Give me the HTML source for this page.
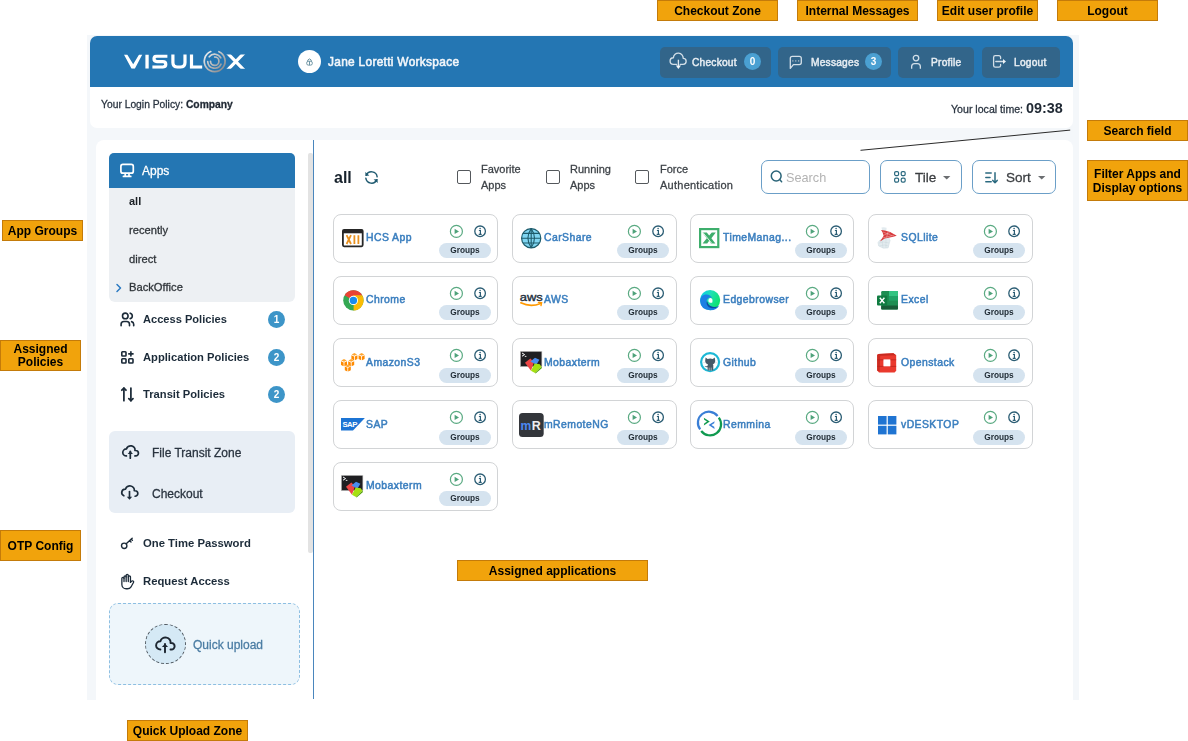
<!DOCTYPE html>
<html><head><meta charset="utf-8"><style>
*{box-sizing:border-box;margin:0;padding:0}
html,body{width:1188px;height:741px;overflow:hidden;background:#fff;font-family:"Liberation Sans",sans-serif}
.a{position:absolute}
.t{position:absolute;white-space:nowrap;line-height:1;will-change:transform}
.m{-webkit-text-stroke:0.28px currentColor}
svg{position:absolute;overflow:visible}
.lbl{will-change:transform;position:absolute;background:#f1a30c;border:1px solid #c47b0a;color:#000;font:bold 12px "Liberation Sans",sans-serif;text-align:center;line-height:14px;display:flex;align-items:center;justify-content:center}
.hbtn{position:absolute;top:46.5px;height:31px;background:#32658a;border-radius:5px}
.htx{will-change:transform;position:absolute;color:#eaf0f5;font:bold 9.9px "Liberation Sans",sans-serif;white-space:nowrap;line-height:1}
.badge{will-change:transform;position:absolute;width:17px;height:17px;border-radius:50%;background:#4aa0d2;color:#fff;font:bold 10px "Liberation Sans",sans-serif;text-align:center;line-height:17px}
.sbadge{will-change:transform;position:absolute;width:17px;height:17px;border-radius:50%;background:#3d95c8;color:#fff;font:bold 10px "Liberation Sans",sans-serif;text-align:center;line-height:17px}
.card{position:absolute;width:165px;height:49px;border:1px solid #d2d4d6;border-radius:8px;background:#fff}
.cname{will-change:transform;position:absolute;top:18.5px;color:#3b7fbf;font:10.4px "Liberation Sans",sans-serif;-webkit-text-stroke:0.5px #3b7fbf;letter-spacing:0.45px;white-space:nowrap;line-height:1}
.pill{will-change:transform;position:absolute;right:6.5px;top:28.8px;width:52px;height:15px;border-radius:8px;background:#d5e3ef;color:#1f2a33;font:bold 8.3px "Liberation Sans",sans-serif;text-align:center;line-height:15px}
.tb{position:absolute;top:159.5px;height:34.5px;border:1.5px solid #6b9fc8;border-radius:7px;background:#fff}
</style></head><body>
<div class="lbl" style="left:657px;top:0px;width:121px;height:21px">Checkout Zone</div>
<div class="lbl" style="left:797px;top:0px;width:121px;height:21px">Internal Messages</div>
<div class="lbl" style="left:937px;top:0px;width:101px;height:21px">Edit user profile</div>
<div class="lbl" style="left:1057px;top:0px;width:101px;height:21px">Logout</div>
<div class="a" style="left:87px;top:34.5px;width:992px;height:665px;background:#f4f7fa"></div>
<div class="a" style="left:90px;top:36px;width:983px;height:91.5px;background:#fff;border-radius:7px;overflow:hidden"><div class="a" style="left:0;top:0;width:983px;height:51.3px;background:#2476b3"></div></div>
<svg style="left:120px;top:48px" width="130" height="28" viewBox="0 0 130 28">
<defs><linearGradient id="lg" x1="0" y1="0" x2="1" y2="1"><stop offset="0" stop-color="#f4f6f8"/><stop offset="1" stop-color="#7d7f82"/></linearGradient></defs>
<defs><clipPath id="lc"><rect x="0" y="6.5" width="130" height="14.2"/></clipPath></defs>
<g clip-path="url(#lc)">
<path d="M3.9,6.5 L7.2,6.5 L13.2,16.2 L19.1,6.5 L22.3,6.5 L14.8,20.7 L11.6,20.7 Z" fill="#fff"/>
<rect x="25.4" y="6.5" width="3.3" height="14.2" fill="#fff"/>
<g fill="none" stroke="#fff" stroke-width="3.2">
<path d="M47.4,8.1 H37 Q34,8.1 34,10.85 Q34,13.6 37,13.6 H42.8 Q45.8,13.6 45.8,16.35 Q45.8,19.1 42.8,19.1 H32.4"/>
<path d="M52.9,4 V14.6 Q52.9,19.1 57.4,19.1 H60.5 Q65,19.1 65,14.6 V4"/>
<path d="M71.5,4 V19.1 H82.2"/>
<path d="M106.39,4 L125.11,23.2 M125.11,4 L106.39,23.2"/>
</g></g>
<path d="M98.93,3.70 A10.4,10.4 0 1 1 90.80,3.56 M89.26,8.79 A7.0,7.0 0 0 1 100.82,9.81 M101.04,16.16 A7.0,7.0 0 0 1 87.72,13.69 M94.70,9.00 A4.2,4.2 0 1 1 90.50,13.35" fill="none" stroke="url(#lg)" stroke-width="1.7" stroke-linecap="round"/>
</svg>
<div class="a" style="left:298.1px;top:50.1px;width:23px;height:23px;border-radius:50%;background:#fff"></div>
<svg style="left:305.3px;top:56.8px" width="9" height="9" viewBox="0 0 9 9"><g fill="none" stroke="#6d94a3" stroke-width="1"><path d="M2.8,4.5 V3 Q4.5,0.8 6.2,3 V4.5"/><rect x="1.7" y="4.3" width="5.6" height="3.8" rx="1.6"/><path d="M4.5,4.3 V8.1"/></g></svg>
<div class="t m" style="left:328px;top:54.83px;font:11.9px 'Liberation Sans',sans-serif;color:#f2f6fa;-webkit-text-stroke:0.55px #f2f6fa;letter-spacing:0.3px">Jane Loretti Workspace</div>
<div class="hbtn" style="left:660px;width:111px"></div>
<div class="hbtn" style="left:778px;width:113.4px"></div>
<div class="hbtn" style="left:898.3px;width:76.2px"></div>
<div class="hbtn" style="left:982px;width:78px"></div>
<div class="t m" style="left:692.4px;top:56.77px;font:10.2px 'Liberation Sans',sans-serif;color:#e8eef3;-webkit-text-stroke:0.45px #e8eef3;letter-spacing:0.22px">Checkout</div>
<div class="t m" style="left:810.7px;top:56.77px;font:10.2px 'Liberation Sans',sans-serif;color:#e8eef3;-webkit-text-stroke:0.45px #e8eef3;letter-spacing:0.22px">Messages</div>
<div class="t m" style="left:931px;top:56.77px;font:10.2px 'Liberation Sans',sans-serif;color:#e8eef3;-webkit-text-stroke:0.45px #e8eef3;letter-spacing:0.22px">Profile</div>
<div class="t m" style="left:1014.2px;top:56.77px;font:10.2px 'Liberation Sans',sans-serif;color:#e8eef3;-webkit-text-stroke:0.45px #e8eef3;letter-spacing:0.22px">Logout</div>
<div class="badge" style="left:744.3px;top:53.3px">0</div>
<div class="badge" style="left:864.9px;top:53.3px">3</div>
<svg style="left:664px;top:50px" width="28" height="24" viewBox="664 50 28 24"><g fill="none" stroke="#d3dfe8" stroke-width="1.35" stroke-linecap="round" stroke-linejoin="round"><path d="M676.6,64.3 H673.4 A3.3,3.3 0 0 1 673.4,57.7 A4.9,4.9 0 0 1 683.2,58.4 A2.95,2.95 0 0 1 683.2,64.3 H680.2"/></g><path d="M678.4,59.7 V66" stroke="#dfe8ef" stroke-width="1.35"/><path d="M675.8,65.5 L681,65.5 L678.4,68.9 Z" fill="#f2f6f9"/></svg>
<svg style="left:788px;top:54px" width="16" height="16" viewBox="0 0 16 16"><path d="M2.3,14.4 V4.3 Q2.3,2.3 4.3,2.3 H11.3 Q13.3,2.3 13.3,4.3 V8.6 Q13.3,10.6 11.3,10.6 H5.4 Z" fill="none" stroke="#d3dfe8" stroke-width="1.3" stroke-linejoin="round"/><g fill="#aebfcc"><rect x="4.3" y="6.2" width="1.1" height="1.4"/><rect x="7.2" y="6.2" width="1.1" height="1.4"/><rect x="10.1" y="6.2" width="1.1" height="1.4"/></g></svg>
<svg style="left:910px;top:54px" width="12" height="16" viewBox="0 0 12 16"><g fill="none" stroke="#d3dfe8" stroke-width="1.3"><circle cx="6" cy="4.1" r="2.75"/><path d="M1.65,14.8 V12.6 Q1.65,9.6 4.6,9.6 H7.4 Q10.35,9.6 10.35,12.6 V14.8"/></g></svg>
<svg style="left:990px;top:52px" width="18" height="18" viewBox="0 0 18 18"><g fill="none" stroke="#d3dfe8" stroke-width="1.3" stroke-linecap="round" stroke-linejoin="round"><path d="M10.6,6.6 V5.4 Q10.6,3.7 8.9,3.7 H5.3 Q3.6,3.7 3.6,5.4 V13.4 Q3.6,15.1 5.3,15.1 H8.9 Q10.6,15.1 10.6,13.4 V12.4"/><path d="M5.8,9.5 H13.4"/></g><path d="M13,6.9 L16,9.5 L13,12.1 Z" fill="#eef3f7"/></svg>
<div class="t m" style="left:100.7px;top:99.2px;font:10.3px 'Liberation Sans',sans-serif;color:#2a3440">Your Login Policy: <b style="color:#1f2833">Company</b></div>
<div class="t m" style="left:950.6px;top:103.01px;font:10.6px 'Liberation Sans',sans-serif;color:#2a3440;">Your local time:</div>
<div class="t" style="left:1026px;top:99.57px;font:bold 14.4px 'Liberation Sans',sans-serif;color:#1f2833;">09:38</div>
<div class="a" style="left:96px;top:140px;width:977px;height:560px;background:#fff;border-radius:8px 8px 0 0"></div>
<div class="a" style="left:308px;top:153px;width:4.5px;height:400px;background:#e3e3e3;border-radius:2px"></div>
<div class="a" style="left:312.7px;top:140px;width:1.4px;height:559px;background:#4a86bd"></div>
<div class="a" style="left:109px;top:152.8px;width:185.6px;height:148.8px;background:#edf0f3;border-radius:5px 5px 6px 6px;overflow:hidden"><div class="a" style="left:0;top:0;width:186px;height:35.3px;background:#2476b3"></div></div>
<svg style="left:118px;top:161px" width="18" height="18" viewBox="0 0 18 18"><g fill="none" stroke="#fff" stroke-width="1.7" stroke-linecap="round"><rect x="2.9" y="3.4" width="12.4" height="8.8" rx="2"/><path d="M7.2,12.6 V15.2 M11,12.6 V15.2"/><path d="M5.4,15.4 H12.8"/></g></svg>
<div class="t m" style="left:142.3px;top:163.84px;font:12px 'Liberation Sans',sans-serif;color:#fff;">Apps</div>
<div class="t" style="left:129.3px;top:195.44px;font:bold 11px 'Liberation Sans',sans-serif;color:#1a1f24;">all</div>
<div class="t m" style="left:129.3px;top:224.16px;font:11.2px 'Liberation Sans',sans-serif;color:#2f3439;">recently</div>
<div class="t m" style="left:129.3px;top:252.76px;font:11.2px 'Liberation Sans',sans-serif;color:#2f3439;">direct</div>
<div class="t m" style="left:129.3px;top:281.16px;font:11.2px 'Liberation Sans',sans-serif;color:#2f3439;">BackOffice</div>
<svg style="left:115px;top:283px" width="8" height="10" viewBox="0 0 8 10"><path d="M2,1.5 L5.5,5 L2,8.5" fill="none" stroke="#2b79c2" stroke-width="1.5" stroke-linecap="round" stroke-linejoin="round"/></svg>
<svg style="left:118.8px;top:310.8px" width="16.8" height="16.8" viewBox="0 0 24 24"><g fill="none" stroke="#1c2b39" stroke-width="2.3" stroke-linecap="round" stroke-linejoin="round"><path d="M9 7m-4 0a4 4 0 1 0 8 0a4 4 0 1 0 -8 0"/><path d="M3 21v-2a4 4 0 0 1 4 -4h4a4 4 0 0 1 4 4v2"/><path d="M16 3.13a4 4 0 0 1 0 7.75"/><path d="M21 21v-2a4 4 0 0 0 -3 -3.85"/></g></svg>
<div class="t" style="left:142.5px;top:313.45px;font:bold 11.1px 'Liberation Sans',sans-serif;color:#1c2b39;">Access Policies</div>
<div class="sbadge" style="left:268px;top:311.1px">1</div>
<svg style="left:118.8px;top:348.8px" width="16.8" height="16.8" viewBox="0 0 24 24"><g fill="none" stroke="#1c2b39" stroke-width="2.3" stroke-linecap="round" stroke-linejoin="round"><path d="M4 4m0 1a1 1 0 0 1 1 -1h4a1 1 0 0 1 1 1v4a1 1 0 0 1 -1 1h-4a1 1 0 0 1 -1 -1z"/><path d="M4 14m0 1a1 1 0 0 1 1 -1h4a1 1 0 0 1 1 1v4a1 1 0 0 1 -1 1h-4a1 1 0 0 1 -1 -1z"/><path d="M14 14m0 1a1 1 0 0 1 1 -1h4a1 1 0 0 1 1 1v4a1 1 0 0 1 -1 1h-4a1 1 0 0 1 -1 -1z"/><path d="M14 7l6 0"/><path d="M17 4l0 6"/></g></svg>
<div class="t" style="left:142.5px;top:351.06px;font:bold 11.2px 'Liberation Sans',sans-serif;color:#1c2b39;">Application Policies</div>
<div class="sbadge" style="left:268px;top:348.5px">2</div>
<svg style="left:118.8px;top:386.3px" width="16.8" height="16.8" viewBox="0 0 24 24"><g fill="none" stroke="#1c2b39" stroke-width="2.5" stroke-linecap="round" stroke-linejoin="round"><path d="M7 3l0 18"/><path d="M10 6l-3 -3l-3 3"/><path d="M20 18l-3 3l-3 -3"/><path d="M17 21l0 -18"/></g></svg>
<div class="t" style="left:142.5px;top:388.46px;font:bold 11.2px 'Liberation Sans',sans-serif;color:#1c2b39;">Transit Policies</div>
<div class="sbadge" style="left:268px;top:386px">2</div>
<div class="a" style="left:109.2px;top:431px;width:185.8px;height:82px;background:#e8eef5;border-radius:6px"></div>
<svg style="left:121.2px;top:442.4px" width="18.6" height="18.6" viewBox="0 0 24 24"><g fill="none" stroke="#1c2b39" stroke-width="2.2" stroke-linecap="round" stroke-linejoin="round"><path d="M7 18a4.6 4.4 0 0 1 0 -9a5 4.5 0 0 1 11 2h1a3.5 3.5 0 0 1 0 7h-1"/><path d="M12 12l0 9"/></g><path d="M8.6,15.4 L12,11.6 L15.4,15.4 Z" fill="#1c2b39"/></svg>
<div class="t m" style="left:151.7px;top:446.04px;font:12px 'Liberation Sans',sans-serif;color:#2a3440;">File Transit Zone</div>
<svg style="left:120.4px;top:481.6px" width="19" height="19" viewBox="0 0 24 24"><g fill="none" stroke="#1c2b39" stroke-width="2.1" stroke-linecap="round" stroke-linejoin="round"><path d="M19 18a3.5 3.5 0 0 0 0 -7h-1a5 4.5 0 0 0 -11 -2a4.6 4.4 0 0 0 -2.1 8.4"/><path d="M12 12l0 8"/></g><path d="M8.6,18.6 L12,22.4 L15.4,18.6 Z" fill="#1c2b39"/></svg>
<div class="t m" style="left:151.7px;top:486.84px;font:12px 'Liberation Sans',sans-serif;color:#2a3440;">Checkout</div>
<svg style="left:120px;top:537px" width="14" height="13" viewBox="0 0 14 13"><g fill="none" stroke="#1c2b39" stroke-width="1.4" stroke-linecap="round"><circle cx="4.2" cy="8.8" r="2.7"/><path d="M6.2,6.8 L12.2,1.2 M9.6,3.6 L11,5 M11.2,2.1 L12.4,3.3"/></g></svg>
<div class="t" style="left:142.5px;top:537.27px;font:bold 11.3px 'Liberation Sans',sans-serif;color:#1c2b39;">One Time Password</div>
<svg style="left:118.8px;top:572.5px" width="17.2" height="17.2" viewBox="0 0 24 24"><g fill="none" stroke="#1c2b39" stroke-width="1.8" stroke-linecap="round" stroke-linejoin="round"><g transform="translate(24,0) scale(-1,1)"><path d="M8 13v-7.5a1.5 1.5 0 0 1 3 0v6.5"/><path d="M11 5.5v-2a1.5 1.5 0 1 1 3 0v8.5"/><path d="M14 5.5a1.5 1.5 0 0 1 3 0v6.5"/><path d="M17 7.5a1.5 1.5 0 0 1 3 0v8.5a6 6 0 0 1 -6 6h-2h.208a6 6 0 0 1 -5.012 -2.7a69.74 69.74 0 0 1 -.196 -.3c-.312 -.479 -1.407 -2.388 -3.286 -5.728a1.5 1.5 0 0 1 .536 -2.022a1.867 1.867 0 0 1 2.28 .28l1.47 1.47"/></g></g></svg>
<div class="t" style="left:142.5px;top:574.87px;font:bold 11.3px 'Liberation Sans',sans-serif;color:#1c2b39;">Request Access</div>
<div class="a" style="left:109.2px;top:603.2px;width:190.4px;height:81.5px;background:#eef6fb;border:1px dashed #8dbfe2;border-radius:9px"></div>
<div class="a" style="left:145.2px;top:624px;width:40.4px;height:40.4px;background:#d5e9f5;border:1px dashed #555e66;border-radius:50%"></div>
<svg style="left:154.4px;top:633.2px" width="22" height="22" viewBox="0 0 24 24"><g fill="none" stroke="#1d2630" stroke-width="2.1" stroke-linecap="round" stroke-linejoin="round"><path d="M7 18a4.6 4.4 0 0 1 0 -9a5 4.5 0 0 1 11 2h1a3.5 3.5 0 0 1 0 7h-1"/><path d="M12 12l0 9"/></g><path d="M8.6,15.4 L12,11.6 L15.4,15.4 Z" fill="#1d2630"/></svg>
<div class="t m" style="left:193.1px;top:638.14px;font:12px 'Liberation Sans',sans-serif;color:#4a7ca3;">Quick upload</div>
<div class="t" style="left:333.9px;top:169.02px;font:bold 16px 'Liberation Sans',sans-serif;color:#17222c;">all</div>
<svg style="left:362.6px;top:168.6px" width="17" height="17" viewBox="0 0 24 24"><g fill="none" stroke="#1f5a70" stroke-width="2" stroke-linecap="round" stroke-linejoin="round"><path d="M20 11a8.1 8.1 0 0 0 -15.5 -2"/><path d="M4 13a8.1 8.1 0 0 0 15.5 2"/></g><path d="M3.2,4.2 L3.6,9.8 L9,9.2 Z M20.8,19.8 L20.4,14.2 L15,14.8 Z" fill="#1f5a70"/></svg>
<div class="a" style="left:456.5px;top:169.8px;width:14.2px;height:14.2px;border:1.8px solid #54585c;border-radius:2px"></div>
<div class="t m" style="left:481.2px;top:163.44px;font:11px 'Liberation Sans',sans-serif;color:#3e4348;">Favorite</div>
<div class="t m" style="left:481.2px;top:178.54px;font:11px 'Liberation Sans',sans-serif;color:#3e4348;">Apps</div>
<div class="a" style="left:545.5px;top:169.8px;width:14.2px;height:14.2px;border:1.8px solid #54585c;border-radius:2px"></div>
<div class="t m" style="left:570px;top:163.44px;font:11px 'Liberation Sans',sans-serif;color:#3e4348;">Running</div>
<div class="t m" style="left:570px;top:178.54px;font:11px 'Liberation Sans',sans-serif;color:#3e4348;">Apps</div>
<div class="a" style="left:635px;top:169.8px;width:14.2px;height:14.2px;border:1.8px solid #54585c;border-radius:2px"></div>
<div class="t m" style="left:659.7px;top:163.44px;font:11px 'Liberation Sans',sans-serif;color:#3e4348;">Force</div>
<div class="t m" style="left:659.7px;top:178.54px;font:11px 'Liberation Sans',sans-serif;color:#3e4348;letter-spacing:0.25px">Authentication</div>
<div class="tb" style="left:761px;width:109.2px"></div>
<svg style="left:770px;top:169.6px" width="13" height="13" viewBox="0 0 13 13"><g fill="none" stroke="#2a6478" stroke-width="1.5" stroke-linecap="round"><circle cx="6.2" cy="6" r="4.9"/><path d="M9.8,9.6 L11.6,11.8"/></g></svg>
<div class="t" style="left:785.6px;top:170.81px;font:12.7px 'Liberation Sans',sans-serif;color:#b3b3b3;">Search</div>
<div class="tb" style="left:880px;width:81.5px"></div>
<svg style="left:891.8px;top:168.5px" width="15.8" height="15.8" viewBox="0 0 24 24"><g fill="none" stroke="#2b6a80" stroke-width="1.8" stroke-linecap="round" stroke-linejoin="round"><path d="M4 4m0 2a2 2 0 0 1 2 -2h2a2 2 0 0 1 2 2v2a2 2 0 0 1 -2 2h-2a2 2 0 0 1 -2 -2z"/><path d="M14 4m0 2a2 2 0 0 1 2 -2h2a2 2 0 0 1 2 2v2a2 2 0 0 1 -2 2h-2a2 2 0 0 1 -2 -2z"/><path d="M4 14m0 2a2 2 0 0 1 2 -2h2a2 2 0 0 1 2 2v2a2 2 0 0 1 -2 2h-2a2 2 0 0 1 -2 -2z"/><path d="M14 14m0 2a2 2 0 0 1 2 -2h2a2 2 0 0 1 2 2v2a2 2 0 0 1 -2 2h-2a2 2 0 0 1 -2 -2z"/></g></svg>
<div class="t m" style="left:914.6px;top:169.68px;font:13.5px 'Liberation Sans',sans-serif;color:#3a3d40;">Tile</div>
<svg style="left:942.6px;top:175.9px" width="8" height="4" viewBox="0 0 8 4"><path d="M0,0 H7.4 L3.7,3.4 Z" fill="#6b6e71"/></svg>
<div class="tb" style="left:971.7px;width:84.8px"></div>
<svg style="left:985px;top:171.5px" width="14" height="12" viewBox="0 0 14 12"><g fill="none" stroke="#2b6a80" stroke-width="1.5" stroke-linecap="round" stroke-linejoin="round"><path d="M0.8,1 H6.2 M0.8,5.4 H5 M0.8,9.8 H6.2"/><path d="M10,0.8 V10.8 M7.8,8.4 L10,10.8 L12.2,8.4"/></g></svg>
<div class="t m" style="left:1005.9px;top:169.68px;font:13.5px 'Liberation Sans',sans-serif;color:#3a3d40;">Sort</div>
<svg style="left:1038px;top:175.9px" width="8" height="4" viewBox="0 0 8 4"><path d="M0,0 H7.4 L3.7,3.4 Z" fill="#6b6e71"/></svg>
<div class="card" style="left:333.3px;top:213.5px;width:165.2px"><svg style="left:8.00px;top:14.40px" width="21.6" height="18.2" viewBox="0 0 21.6 18.2"><rect x="0.9" y="0.9" width="19.8" height="16.4" rx="1.2" fill="#fff" stroke="#262626" stroke-width="1.8"/><rect x="0.9" y="0.9" width="19.8" height="3.4" fill="#262626"/><g stroke="#e8901e" stroke-width="1.8" fill="none"><path d="M4.6,6.2 L9,15 M9,6.2 L4.6,15 M12.4,6.2 V15 M16.4,6.2 V15"/></g></svg><div class="cname" style="left:31.3px">HCS App</div><svg style="right:33.5px;top:9.1px" width="15" height="15" viewBox="0 0 15 15"><circle cx="7.4" cy="7.4" r="6" fill="none" stroke="#5aaa82" stroke-width="1.2"/><path d="M5.6,4.8 L10,7.4 L5.6,10 Z" fill="#4ea27a"/></svg><svg style="right:9.85px;top:10.25px" width="14" height="14" viewBox="0 0 14 14"><circle cx="6.1" cy="6.3" r="5.3" fill="none" stroke="#2b5d74" stroke-width="1.3"/><circle cx="6.1" cy="3.6" r="0.8" fill="#2b5d74"/><path d="M4.9,5.5 H6.4 V9.1 M4.7,9.3 H7.7" fill="none" stroke="#2b5d74" stroke-width="1.2"/></svg><div class="pill">Groups</div></div>
<div class="card" style="left:512.1px;top:213.5px;width:164.8px"><svg style="left:8.20px;top:13.30px" width="20.4" height="20.4" viewBox="0 0 20.4 20.4"><circle cx="10.2" cy="10.2" r="9.6" fill="#80d6f2" stroke="#1d5b6b" stroke-width="1.2"/><g fill="none" stroke="#1d5b6b" stroke-width="1.1"><path d="M10.2,0.6 V19.8 M0.6,10.2 H19.8 M1.8,5.4 H18.6 M1.8,15 H18.6"/><path d="M10.2,0.6 Q3.6,10.2 10.2,19.8 M10.2,0.6 Q16.8,10.2 10.2,19.8"/></g></svg><div class="cname" style="left:31.3px">CarShare</div><svg style="right:33.5px;top:9.1px" width="15" height="15" viewBox="0 0 15 15"><circle cx="7.4" cy="7.4" r="6" fill="none" stroke="#5aaa82" stroke-width="1.2"/><path d="M5.6,4.8 L10,7.4 L5.6,10 Z" fill="#4ea27a"/></svg><svg style="right:9.85px;top:10.25px" width="14" height="14" viewBox="0 0 14 14"><circle cx="6.1" cy="6.3" r="5.3" fill="none" stroke="#2b5d74" stroke-width="1.3"/><circle cx="6.1" cy="3.6" r="0.8" fill="#2b5d74"/><path d="M4.9,5.5 H6.4 V9.1 M4.7,9.3 H7.7" fill="none" stroke="#2b5d74" stroke-width="1.2"/></svg><div class="pill">Groups</div></div>
<div class="card" style="left:690.3px;top:213.5px;width:164.2px"><svg style="left:8.20px;top:13.20px" width="20.4" height="20.2" viewBox="0 0 20.4 20.2"><rect x="1.1" y="1.1" width="18.2" height="18" fill="#fff" stroke="#3eae6c" stroke-width="2.2"/><path d="M3.4,4.6 H7.8 L10.2,7.6 L12.8,4.6 H16.8 L12.4,10.2 L16.4,15.4 H12 L10.2,12.8 L8.2,15.4 H3.6 L7.8,10.2 Z" fill="#3eae6c"/><path d="M3.6,4.2 L12.8,15.4" stroke="#fff" stroke-width="0.8"/></svg><div class="cname" style="left:31.3px">TimeManag...</div><svg style="right:33.5px;top:9.1px" width="15" height="15" viewBox="0 0 15 15"><circle cx="7.4" cy="7.4" r="6" fill="none" stroke="#5aaa82" stroke-width="1.2"/><path d="M5.6,4.8 L10,7.4 L5.6,10 Z" fill="#4ea27a"/></svg><svg style="right:9.85px;top:10.25px" width="14" height="14" viewBox="0 0 14 14"><circle cx="6.1" cy="6.3" r="5.3" fill="none" stroke="#2b5d74" stroke-width="1.3"/><circle cx="6.1" cy="3.6" r="0.8" fill="#2b5d74"/><path d="M4.9,5.5 H6.4 V9.1 M4.7,9.3 H7.7" fill="none" stroke="#2b5d74" stroke-width="1.2"/></svg><div class="pill">Groups</div></div>
<div class="card" style="left:868.4px;top:213.5px;width:164.2px"><svg style="left:8.70px;top:12.20px" width="18.8" height="21.6" viewBox="0 0 18.8 21.6"><path d="M10.8,10.5 L12.1,13.5 L10.1,20.9 L5.4,21.2 L0.65,18.9 L0,15.6 L2,13 Z" fill="#e3ebef" stroke="#ccdae0" stroke-width="0.5"/><g stroke="#c5d4da" stroke-width="0.4" fill="none"><path d="M1,16 Q5,14 11,16 M1.6,19 Q6,17 10.6,19 M4,13 L5,21 M8,12 L8,21"/></g><path d="M3.4,0.6 Q6,-0.4 8.6,0.8 L8.4,3.4 L4.4,4 Z" fill="#e3ebef"/><path d="M3,3.1 L7,3.4 L12.1,5.1 L18.8,8.8 L14.1,10.1 L6.7,11.5 L2,14.5 L5.7,8.8 L4.4,5.1 Z" fill="#d7393b"/><g stroke="#f7d0d0" stroke-width="0.45" fill="none" opacity="0.9"><path d="M5,5 L14,8.6 M6,8 L12,5.6 M8.6,10.6 L10,4.6 M4.6,11 L16,8.2"/></g></svg><div class="cname" style="left:31.3px">SQLlite</div><svg style="right:33.5px;top:9.1px" width="15" height="15" viewBox="0 0 15 15"><circle cx="7.4" cy="7.4" r="6" fill="none" stroke="#5aaa82" stroke-width="1.2"/><path d="M5.6,4.8 L10,7.4 L5.6,10 Z" fill="#4ea27a"/></svg><svg style="right:9.85px;top:10.25px" width="14" height="14" viewBox="0 0 14 14"><circle cx="6.1" cy="6.3" r="5.3" fill="none" stroke="#2b5d74" stroke-width="1.3"/><circle cx="6.1" cy="3.6" r="0.8" fill="#2b5d74"/><path d="M4.9,5.5 H6.4 V9.1 M4.7,9.3 H7.7" fill="none" stroke="#2b5d74" stroke-width="1.2"/></svg><div class="pill">Groups</div></div>
<div class="card" style="left:333.3px;top:275.7px;width:165.2px"><svg style="left:8.40px;top:13.10px" width="20.8" height="20.8" viewBox="0 0 20.8 20.8"><circle cx="10.4" cy="10.4" r="10.2" fill="#34a853"/><path d="M10.4,10.4 L1.6,5.3 A10.2,10.2 0 0 1 19.2,5.3 Z" fill="#ea4335"/><path d="M10.4,10.4 L19.2,5.3 A10.2,10.2 0 0 1 10.4,20.6 Z" fill="#fbbc04"/><path d="M10.4,10.4 L10.4,5.3 L19.2,5.3 Z" fill="#fbbc04"/><path d="M10.4,10.4 L6,12.9 L10.4,20.6 Z" fill="#34a853"/><circle cx="10.4" cy="10.4" r="4.6" fill="#fff"/><circle cx="10.4" cy="10.4" r="3.7" fill="#1a8cec"/></svg><div class="cname" style="left:31.3px">Chrome</div><svg style="right:33.5px;top:9.1px" width="15" height="15" viewBox="0 0 15 15"><circle cx="7.4" cy="7.4" r="6" fill="none" stroke="#5aaa82" stroke-width="1.2"/><path d="M5.6,4.8 L10,7.4 L5.6,10 Z" fill="#4ea27a"/></svg><svg style="right:9.85px;top:10.25px" width="14" height="14" viewBox="0 0 14 14"><circle cx="6.1" cy="6.3" r="5.3" fill="none" stroke="#2b5d74" stroke-width="1.3"/><circle cx="6.1" cy="3.6" r="0.8" fill="#2b5d74"/><path d="M4.9,5.5 H6.4 V9.1 M4.7,9.3 H7.7" fill="none" stroke="#2b5d74" stroke-width="1.2"/></svg><div class="pill">Groups</div></div>
<div class="card" style="left:512.1px;top:275.7px;width:164.8px"><svg style="left:6.70px;top:16.80px" width="23" height="14.6" viewBox="0 0 23 14.6"><text x="-0.3" y="7.6" font-family="Liberation Sans" font-size="10.6" fill="#232f3e" stroke="#232f3e" stroke-width="0.35" textLength="23" lengthAdjust="spacingAndGlyphs">aws</text><path d="M0.8,9.8 Q10.6,14.6 20.6,10.4" fill="none" stroke="#ff9900" stroke-width="1.6" stroke-linecap="round"/><path d="M18.4,9.4 L21.6,9.6 L21,12.6" fill="none" stroke="#ff9900" stroke-width="1.4" stroke-linecap="round"/></svg><div class="cname" style="left:31.3px">AWS</div><svg style="right:33.5px;top:9.1px" width="15" height="15" viewBox="0 0 15 15"><circle cx="7.4" cy="7.4" r="6" fill="none" stroke="#5aaa82" stroke-width="1.2"/><path d="M5.6,4.8 L10,7.4 L5.6,10 Z" fill="#4ea27a"/></svg><svg style="right:9.85px;top:10.25px" width="14" height="14" viewBox="0 0 14 14"><circle cx="6.1" cy="6.3" r="5.3" fill="none" stroke="#2b5d74" stroke-width="1.3"/><circle cx="6.1" cy="3.6" r="0.8" fill="#2b5d74"/><path d="M4.9,5.5 H6.4 V9.1 M4.7,9.3 H7.7" fill="none" stroke="#2b5d74" stroke-width="1.2"/></svg><div class="pill">Groups</div></div>
<div class="card" style="left:690.3px;top:275.7px;width:164.2px"><svg style="left:8.40px;top:13.40px" width="20.2" height="20.2" viewBox="0 0 20.2 20.2"><defs><linearGradient id="eg1" x1="0" y1="0" x2="1" y2="0.5"><stop offset="0" stop-color="#05c8f5"/><stop offset="0.5" stop-color="#1fe0b4"/><stop offset="1" stop-color="#0ee370"/></linearGradient></defs><circle cx="10.1" cy="10.1" r="10.1" fill="url(#eg1)"/><path d="M0.1,11 Q0.3,5.4 5.4,4.5 Q10,3.8 12.2,8.2 Q10.6,7.2 8.8,7.8 Q6.4,9 6.5,12 Q6.9,16.4 11.2,17.8 Q15.4,18.8 19.2,15.4 Q17,19.9 10.4,20.2 Q0.6,19.9 0.1,11 Z" fill="#1b80e4"/><path d="M6.5,11.4 Q6.2,16.6 11,18.1 Q15.4,19.2 19.2,15.4 Q16.2,17.4 12.6,16.8 Q8.2,16 7.4,11.6 Z" fill="#0b4aa6"/><path d="M8.4,10.6 Q8.4,8.4 10.2,8.1 Q12,8 12.4,9.6 Q12.8,11.2 12.2,12.8 Q10.2,13 9,12.2 Q8.4,11.6 8.4,10.6 Z" fill="#fff"/></svg><div class="cname" style="left:31.3px">Edgebrowser</div><svg style="right:33.5px;top:9.1px" width="15" height="15" viewBox="0 0 15 15"><circle cx="7.4" cy="7.4" r="6" fill="none" stroke="#5aaa82" stroke-width="1.2"/><path d="M5.6,4.8 L10,7.4 L5.6,10 Z" fill="#4ea27a"/></svg><svg style="right:9.85px;top:10.25px" width="14" height="14" viewBox="0 0 14 14"><circle cx="6.1" cy="6.3" r="5.3" fill="none" stroke="#2b5d74" stroke-width="1.3"/><circle cx="6.1" cy="3.6" r="0.8" fill="#2b5d74"/><path d="M4.9,5.5 H6.4 V9.1 M4.7,9.3 H7.7" fill="none" stroke="#2b5d74" stroke-width="1.2"/></svg><div class="pill">Groups</div></div>
<div class="card" style="left:868.4px;top:275.7px;width:164.2px"><svg style="left:7.60px;top:14.20px" width="21" height="18.6" viewBox="0 0 21 18.6"><rect x="4.2" y="0" width="16.8" height="18.6" rx="1.2" fill="#1e8e52"/><rect x="12" y="0" width="9" height="5" fill="#33c481"/><rect x="12" y="5" width="9" height="4.6" fill="#21a366"/><rect x="4.2" y="14.4" width="16.8" height="4.2" rx="1" fill="#185c37"/><rect x="0" y="4.4" width="10.2" height="10" rx="1" fill="#107c41"/><path d="M2.8,6.8 L7.4,12.2 M7.4,6.8 L2.8,12.2" stroke="#fff" stroke-width="1.4"/></svg><div class="cname" style="left:31.3px">Excel</div><svg style="right:33.5px;top:9.1px" width="15" height="15" viewBox="0 0 15 15"><circle cx="7.4" cy="7.4" r="6" fill="none" stroke="#5aaa82" stroke-width="1.2"/><path d="M5.6,4.8 L10,7.4 L5.6,10 Z" fill="#4ea27a"/></svg><svg style="right:9.85px;top:10.25px" width="14" height="14" viewBox="0 0 14 14"><circle cx="6.1" cy="6.3" r="5.3" fill="none" stroke="#2b5d74" stroke-width="1.3"/><circle cx="6.1" cy="3.6" r="0.8" fill="#2b5d74"/><path d="M4.9,5.5 H6.4 V9.1 M4.7,9.3 H7.7" fill="none" stroke="#2b5d74" stroke-width="1.2"/></svg><div class="pill">Groups</div></div>
<div class="card" style="left:333.3px;top:338px;width:165.2px"><svg style="left:6.70px;top:14.30px" width="23.8" height="18.6" viewBox="0 0 23.8 18.6"><g transform="translate(10.4,0)"><path d="M0.3,1.5 L3,0 L5.7,1.5 L3,2.8 Z" fill="#ffa733"/><path d="M0,2.2 L2.6,3.4 V7.2 L0,5.9 Z M3.4,3.4 L6,2.2 V5.9 L3.4,7.2 Z" fill="#ff8a00"/></g><g transform="translate(17.6,0)"><path d="M0.3,1.5 L3,0 L5.7,1.5 L3,2.8 Z" fill="#ffa733"/><path d="M0,2.2 L2.6,3.4 V7.2 L0,5.9 Z M3.4,3.4 L6,2.2 V5.9 L3.4,7.2 Z" fill="#ff8a00"/></g><g transform="translate(0,6)"><path d="M0.3,1.5 L3,0 L5.7,1.5 L3,2.8 Z" fill="#ffa733"/><path d="M0,2.2 L2.6,3.4 V7.2 L0,5.9 Z M3.4,3.4 L6,2.2 V5.9 L3.4,7.2 Z" fill="#ff8a00"/></g><g transform="translate(7.2,6)"><path d="M0.3,1.5 L3,0 L5.7,1.5 L3,2.8 Z" fill="#ffa733"/><path d="M0,2.2 L2.6,3.4 V7.2 L0,5.9 Z M3.4,3.4 L6,2.2 V5.9 L3.4,7.2 Z" fill="#ff8a00"/></g><g transform="translate(3.8,11.4)"><path d="M0.3,1.5 L3,0 L5.7,1.5 L3,2.8 Z" fill="#ffa733"/><path d="M0,2.2 L2.6,3.4 V7.2 L0,5.9 Z M3.4,3.4 L6,2.2 V5.9 L3.4,7.2 Z" fill="#ff8a00"/></g></svg><div class="cname" style="left:31.3px">AmazonS3</div><svg style="right:33.5px;top:9.1px" width="15" height="15" viewBox="0 0 15 15"><circle cx="7.4" cy="7.4" r="6" fill="none" stroke="#5aaa82" stroke-width="1.2"/><path d="M5.6,4.8 L10,7.4 L5.6,10 Z" fill="#4ea27a"/></svg><svg style="right:9.85px;top:10.25px" width="14" height="14" viewBox="0 0 14 14"><circle cx="6.1" cy="6.3" r="5.3" fill="none" stroke="#2b5d74" stroke-width="1.3"/><circle cx="6.1" cy="3.6" r="0.8" fill="#2b5d74"/><path d="M4.9,5.5 H6.4 V9.1 M4.7,9.3 H7.7" fill="none" stroke="#2b5d74" stroke-width="1.2"/></svg><div class="pill">Groups</div></div>
<div class="card" style="left:512.1px;top:338px;width:164.8px"><svg style="left:6.90px;top:12.40px" width="22.6" height="22.4" viewBox="0 0 22.6 22.4"><rect x="0.3" y="0.3" width="21.6" height="15.4" fill="#1f1f22" stroke="#c9c9c9" stroke-width="0.6"/><path d="M2,2 L4.6,3.6 L2,5.2" stroke="#fff" stroke-width="1" fill="none"/><path d="M4.8,5.4 H6.4" stroke="#fff" stroke-width="0.9"/><path d="M5,11.8 L10.4,7.4 L14,11.2 L11,19.8 Z" fill="#ee4646"/><path d="M10.4,10.4 L15,6.8 L19.4,8.8 L16.4,13.8 Z" fill="#4a8cf0"/><path d="M11,19.8 L14.6,12.4 L19.8,13.2 L21.4,15.8 L15,22 Z" fill="#a6e010"/><path d="M15,22 L21.4,15.8 L22,17 L15.6,22.6 Z" fill="#56a00a"/></svg><div class="cname" style="left:31.3px">Mobaxterm</div><svg style="right:33.5px;top:9.1px" width="15" height="15" viewBox="0 0 15 15"><circle cx="7.4" cy="7.4" r="6" fill="none" stroke="#5aaa82" stroke-width="1.2"/><path d="M5.6,4.8 L10,7.4 L5.6,10 Z" fill="#4ea27a"/></svg><svg style="right:9.85px;top:10.25px" width="14" height="14" viewBox="0 0 14 14"><circle cx="6.1" cy="6.3" r="5.3" fill="none" stroke="#2b5d74" stroke-width="1.3"/><circle cx="6.1" cy="3.6" r="0.8" fill="#2b5d74"/><path d="M4.9,5.5 H6.4 V9.1 M4.7,9.3 H7.7" fill="none" stroke="#2b5d74" stroke-width="1.2"/></svg><div class="pill">Groups</div></div>
<div class="card" style="left:690.3px;top:338px;width:164.2px"><svg style="left:8.40px;top:13.10px" width="20.2" height="20.2" viewBox="0 0 20.2 20.2"><circle cx="10.1" cy="10.1" r="9" fill="#fff" stroke="#1cb8d6" stroke-width="2.2"/><path d="M5.6,5.4 L7.6,6.9 Q10.2,6.2 12.8,6.9 L14.7,5.4 L15.2,8.6 Q15.4,11.6 12.8,12.2 L13.3,13 V18.6 H7.6 V15.2 Q5.8,15.6 4.4,14 Q6,14.6 7.6,14 V13 L8,12.2 Q5,11.6 5.2,8.6 Z" fill="#465a68"/><g stroke="#fff" stroke-width="0.5"><path d="M9.2,15.6 V18.6 M11.2,15.6 V18.6"/></g><path d="M3,10.6 H5.6 M14.6,10.6 H17.2" stroke="#c8d0d4" stroke-width="0.4"/></svg><div class="cname" style="left:31.3px">Github</div><svg style="right:33.5px;top:9.1px" width="15" height="15" viewBox="0 0 15 15"><circle cx="7.4" cy="7.4" r="6" fill="none" stroke="#5aaa82" stroke-width="1.2"/><path d="M5.6,4.8 L10,7.4 L5.6,10 Z" fill="#4ea27a"/></svg><svg style="right:9.85px;top:10.25px" width="14" height="14" viewBox="0 0 14 14"><circle cx="6.1" cy="6.3" r="5.3" fill="none" stroke="#2b5d74" stroke-width="1.3"/><circle cx="6.1" cy="3.6" r="0.8" fill="#2b5d74"/><path d="M4.9,5.5 H6.4 V9.1 M4.7,9.3 H7.7" fill="none" stroke="#2b5d74" stroke-width="1.2"/></svg><div class="pill">Groups</div></div>
<div class="card" style="left:868.4px;top:338px;width:164.2px"><svg style="left:8.10px;top:13.50px" width="19.2" height="19.4" viewBox="0 0 19.2 19.4"><path d="M1.2,0.9 L16.4,0.2 L19.2,2.2 V17.8 L17.6,19.4 L2,19.4 L0.2,17.6 V2 Z" fill="#ea3a2e"/><rect x="6.4" y="6.4" width="7" height="6.9" fill="#fff"/><path d="M1.2,0.9 L16.4,0.2 L19.2,2.2 L3.2,2.8 Z" fill="#c8291f"/><path d="M0.2,2 L1.2,0.9 L3.2,2.8 L2.6,18.6 L0.2,17.6 Z" fill="#cc2b22"/><g stroke="#b8241c" stroke-width="0.7"><path d="M0.2,6.8 H6.4 M0.2,13.4 H6.4 M13.4,6.8 H19.2 M13.4,13.4 H19.2"/></g></svg><div class="cname" style="left:31.3px">Openstack</div><svg style="right:33.5px;top:9.1px" width="15" height="15" viewBox="0 0 15 15"><circle cx="7.4" cy="7.4" r="6" fill="none" stroke="#5aaa82" stroke-width="1.2"/><path d="M5.6,4.8 L10,7.4 L5.6,10 Z" fill="#4ea27a"/></svg><svg style="right:9.85px;top:10.25px" width="14" height="14" viewBox="0 0 14 14"><circle cx="6.1" cy="6.3" r="5.3" fill="none" stroke="#2b5d74" stroke-width="1.3"/><circle cx="6.1" cy="3.6" r="0.8" fill="#2b5d74"/><path d="M4.9,5.5 H6.4 V9.1 M4.7,9.3 H7.7" fill="none" stroke="#2b5d74" stroke-width="1.2"/></svg><div class="pill">Groups</div></div>
<div class="card" style="left:333.3px;top:400px;width:165.2px"><svg style="left:6.50px;top:17.30px" width="23.9" height="12.6" viewBox="0 0 23.9 12.6"><path d="M0,0 H23.9 L12,12.6 H0 Z" fill="#1c74d4"/><text x="1.4" y="9.4" font-family="Liberation Sans" font-weight="bold" font-size="7.8" fill="#fff" letter-spacing="-0.5">SAP</text></svg><div class="cname" style="left:31.3px">SAP</div><svg style="right:33.5px;top:9.1px" width="15" height="15" viewBox="0 0 15 15"><circle cx="7.4" cy="7.4" r="6" fill="none" stroke="#5aaa82" stroke-width="1.2"/><path d="M5.6,4.8 L10,7.4 L5.6,10 Z" fill="#4ea27a"/></svg><svg style="right:9.85px;top:10.25px" width="14" height="14" viewBox="0 0 14 14"><circle cx="6.1" cy="6.3" r="5.3" fill="none" stroke="#2b5d74" stroke-width="1.3"/><circle cx="6.1" cy="3.6" r="0.8" fill="#2b5d74"/><path d="M4.9,5.5 H6.4 V9.1 M4.7,9.3 H7.7" fill="none" stroke="#2b5d74" stroke-width="1.2"/></svg><div class="pill">Groups</div></div>
<div class="card" style="left:512.1px;top:400px;width:164.8px"><svg style="left:6.10px;top:11.50px" width="24.7" height="24" viewBox="0 0 24.7 24"><rect x="0" y="0" width="24.7" height="24" rx="3.6" fill="#33363b"/><text x="1.6" y="17" font-family="Liberation Sans" font-weight="bold" font-size="12.5" fill="#4b88f2" textLength="10.8" lengthAdjust="spacingAndGlyphs">m</text><text x="12.8" y="17" font-family="Liberation Sans" font-weight="bold" font-size="12.5" fill="#eceef0">R</text></svg><div class="cname" style="left:31.3px">mRemoteNG</div><svg style="right:33.5px;top:9.1px" width="15" height="15" viewBox="0 0 15 15"><circle cx="7.4" cy="7.4" r="6" fill="none" stroke="#5aaa82" stroke-width="1.2"/><path d="M5.6,4.8 L10,7.4 L5.6,10 Z" fill="#4ea27a"/></svg><svg style="right:9.85px;top:10.25px" width="14" height="14" viewBox="0 0 14 14"><circle cx="6.1" cy="6.3" r="5.3" fill="none" stroke="#2b5d74" stroke-width="1.3"/><circle cx="6.1" cy="3.6" r="0.8" fill="#2b5d74"/><path d="M4.9,5.5 H6.4 V9.1 M4.7,9.3 H7.7" fill="none" stroke="#2b5d74" stroke-width="1.2"/></svg><div class="pill">Groups</div></div>
<div class="card" style="left:690.3px;top:400px;width:164.2px"><svg style="left:6.70px;top:11.30px" width="24" height="24" viewBox="0 0 24 24"><path d="M2.2,17.4 A10.8,10.8 0 0 1 19.6,4" fill="none" stroke="#3a7fd6" stroke-width="2.2"/><path d="M20.8,5.6 A10.8,10.8 0 0 1 3.2,19" fill="none" stroke="#109a50" stroke-width="2.2"/><path d="M5.8,5.8 L11.8,9.6 L5.8,13.6 L6.2,11.4 L9,9.6 L6.2,7.8 Z" fill="#109a50"/><path d="M16.6,9.2 L10.6,13 L16.6,17 L16.2,14.8 L13.4,13 L16.2,11.2 Z" fill="#3a7fd6"/></svg><div class="cname" style="left:31.3px">Remmina</div><svg style="right:33.5px;top:9.1px" width="15" height="15" viewBox="0 0 15 15"><circle cx="7.4" cy="7.4" r="6" fill="none" stroke="#5aaa82" stroke-width="1.2"/><path d="M5.6,4.8 L10,7.4 L5.6,10 Z" fill="#4ea27a"/></svg><svg style="right:9.85px;top:10.25px" width="14" height="14" viewBox="0 0 14 14"><circle cx="6.1" cy="6.3" r="5.3" fill="none" stroke="#2b5d74" stroke-width="1.3"/><circle cx="6.1" cy="3.6" r="0.8" fill="#2b5d74"/><path d="M4.9,5.5 H6.4 V9.1 M4.7,9.3 H7.7" fill="none" stroke="#2b5d74" stroke-width="1.2"/></svg><div class="pill">Groups</div></div>
<div class="card" style="left:868.4px;top:400px;width:164.2px"><svg style="left:8.70px;top:14.50px" width="18.4" height="18.4" viewBox="0 0 18.4 18.4"><g fill="#1f74d2"><rect x="0" y="0" width="8.6" height="8.6"/><rect x="9.8" y="0" width="8.6" height="8.6"/><rect x="0" y="9.8" width="8.6" height="8.6"/><rect x="9.8" y="9.8" width="8.6" height="8.6"/></g></svg><div class="cname" style="left:31.3px">vDESKTOP</div><svg style="right:33.5px;top:9.1px" width="15" height="15" viewBox="0 0 15 15"><circle cx="7.4" cy="7.4" r="6" fill="none" stroke="#5aaa82" stroke-width="1.2"/><path d="M5.6,4.8 L10,7.4 L5.6,10 Z" fill="#4ea27a"/></svg><svg style="right:9.85px;top:10.25px" width="14" height="14" viewBox="0 0 14 14"><circle cx="6.1" cy="6.3" r="5.3" fill="none" stroke="#2b5d74" stroke-width="1.3"/><circle cx="6.1" cy="3.6" r="0.8" fill="#2b5d74"/><path d="M4.9,5.5 H6.4 V9.1 M4.7,9.3 H7.7" fill="none" stroke="#2b5d74" stroke-width="1.2"/></svg><div class="pill">Groups</div></div>
<div class="card" style="left:333.3px;top:461.7px;width:165.2px"><svg style="left:6.90px;top:12.40px" width="22.6" height="22.4" viewBox="0 0 22.6 22.4"><rect x="0.3" y="0.3" width="21.6" height="15.4" fill="#1f1f22" stroke="#c9c9c9" stroke-width="0.6"/><path d="M2,2 L4.6,3.6 L2,5.2" stroke="#fff" stroke-width="1" fill="none"/><path d="M4.8,5.4 H6.4" stroke="#fff" stroke-width="0.9"/><path d="M5,11.8 L10.4,7.4 L14,11.2 L11,19.8 Z" fill="#ee4646"/><path d="M10.4,10.4 L15,6.8 L19.4,8.8 L16.4,13.8 Z" fill="#4a8cf0"/><path d="M11,19.8 L14.6,12.4 L19.8,13.2 L21.4,15.8 L15,22 Z" fill="#a6e010"/><path d="M15,22 L21.4,15.8 L22,17 L15.6,22.6 Z" fill="#56a00a"/></svg><div class="cname" style="left:31.3px">Mobaxterm</div><svg style="right:33.5px;top:9.1px" width="15" height="15" viewBox="0 0 15 15"><circle cx="7.4" cy="7.4" r="6" fill="none" stroke="#5aaa82" stroke-width="1.2"/><path d="M5.6,4.8 L10,7.4 L5.6,10 Z" fill="#4ea27a"/></svg><svg style="right:9.85px;top:10.25px" width="14" height="14" viewBox="0 0 14 14"><circle cx="6.1" cy="6.3" r="5.3" fill="none" stroke="#2b5d74" stroke-width="1.3"/><circle cx="6.1" cy="3.6" r="0.8" fill="#2b5d74"/><path d="M4.9,5.5 H6.4 V9.1 M4.7,9.3 H7.7" fill="none" stroke="#2b5d74" stroke-width="1.2"/></svg><div class="pill">Groups</div></div>
<div class="lbl" style="left:2px;top:220px;width:81px;height:21px">App Groups</div>
<div class="lbl" style="left:0;top:340px;width:81px;height:31px;line-height:13.6px;padding-top:1.8px">Assigned<br>Policies</div>
<div class="lbl" style="left:0px;top:530px;width:81px;height:31px">OTP Config</div>
<div class="lbl" style="left:127px;top:720px;width:121px;height:21px">Quick Upload Zone</div>
<div class="lbl" style="left:457px;top:560px;width:191px;height:21px">Assigned applications</div>
<div class="lbl" style="left:1087px;top:120px;width:101px;height:21px">Search field</div>
<div class="lbl" style="left:1087px;top:160px;width:101px;height:41px;line-height:14px">Filter Apps and<br>Display options</div>
<svg style="left:0;top:0" width="1188" height="741"><line x1="860.5" y1="150.3" x2="1070.2" y2="130.1" stroke="#2b2b2b" stroke-width="1"/></svg>
</body></html>
